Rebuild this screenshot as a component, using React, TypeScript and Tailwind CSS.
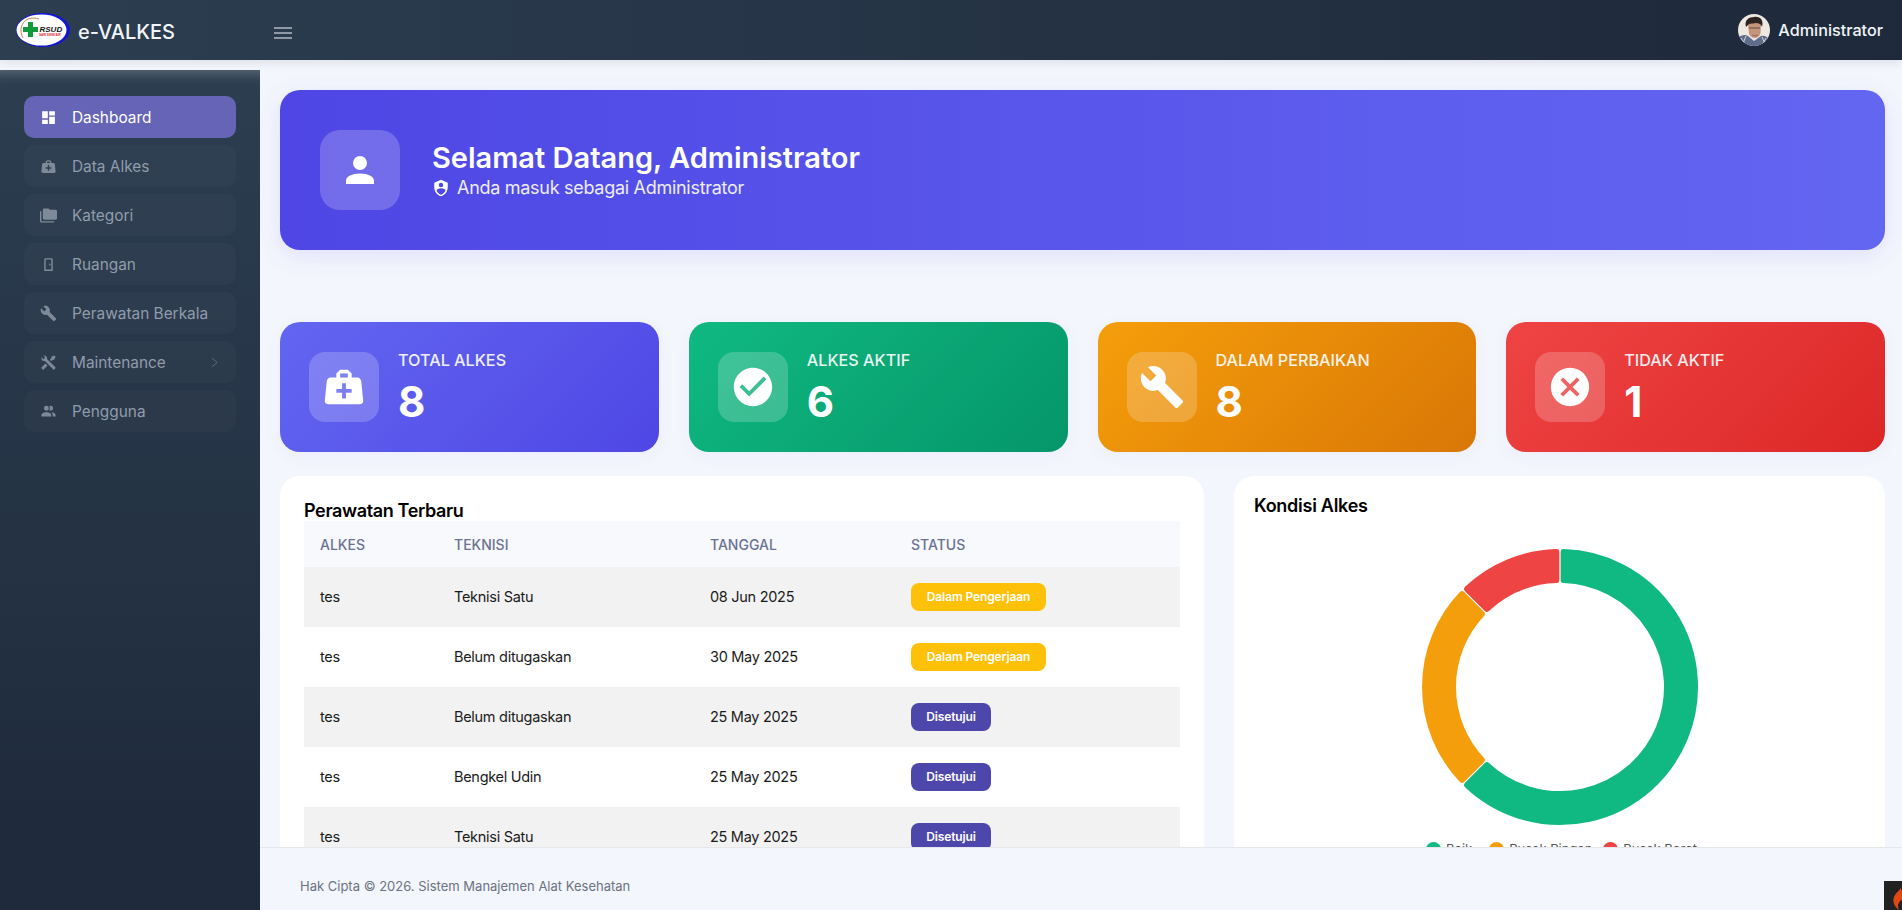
import React from "react";

const ICONS = {
  dashboard: "M13,3V9H21V3M13,21H21V11H13M3,21H11V15H3M3,13H11V3H3V13Z",
  bag: "M10,3L8,5V7H5C3.85,7 3.12,8 3,9L2,19C1.88,20 2.54,21 4,21H20C21.46,21 22.12,20 22,19L21,9C20.88,8 20.06,7 19,7H16V5L14,3H10M10,5H14V7H10V5M11,10H13V13H16V15H13V18H11V15H8V13H11V10Z",
  folders: "M22,4H14L12,2H6A2,2 0 0,0 4,4V16A2,2 0 0,0 6,18H22A2,2 0 0,0 24,16V6A2,2 0 0,0 22,4M2,6H0V20A2,2 0 0,0 2,22H20V20H2V6Z",
  door: "M8,3C6.89,3 6,3.89 6,5V21H18V5C18,3.89 17.11,3 16,3H8M8,5H16V19H8V5M13,11V13H15V11H13Z",
  wrench: "M22.7,19L13.6,9.9C14.5,7.6 14,4.9 12.1,3C10.1,1 7.1,0.6 4.7,1.7L9,6L6,9L1.6,4.7C0.4,7.1 0.9,10.1 2.9,12.1C4.8,14 7.5,14.5 9.8,13.6L18.9,22.7C19.3,23.1 19.9,23.1 20.3,22.7L22.6,20.4C23.1,20 23.1,19.3 22.7,19Z",
  tools: "M21.71 20.29L20.29 21.71A1 1 0 0 1 18.88 21.71L7 9.85A3.81 3.81 0 0 1 6 10A4 4 0 0 1 2.22 4.7L4.76 7.24L5.29 6.71L6.71 5.29L7.24 4.76L4.7 2.22A4 4 0 0 1 10 6A3.81 3.81 0 0 1 9.85 7L21.71 18.88A1 1 0 0 1 21.71 20.29M2.29 18.88A1 1 0 0 0 2.29 20.29L3.71 21.71A1 1 0 0 0 5.12 21.71L10.59 16.25L7.76 13.42M20 2L16 4V6L13.83 8.17L15.83 10.17L18 8H20L22 4Z",
  users: "M16 17V19H2V17S2 13 9 13 16 17 16 17M12.5 7.5A3.5 3.5 0 1 0 9 11A3.5 3.5 0 0 0 12.5 7.5M15.94 13A5.32 5.32 0 0 1 18 17V19H22V17S22 13.37 15.94 13M15 4A3.39 3.39 0 0 0 13.07 4.59A5 5 0 0 1 13.07 10.41A3.39 3.39 0 0 0 15 11A3.5 3.5 0 0 0 15 4Z",
  account: "M12,4A4,4 0 0,1 16,8A4,4 0 0,1 12,12A4,4 0 0,1 8,8A4,4 0 0,1 12,4M12,14C16.42,14 20,15.79 20,18V20H4V18C4,15.79 7.58,14 12,14Z",
  shield: "M12,1L3,5V11C3,16.55 6.84,21.74 12,23C17.16,21.74 21,16.55 21,11V5L12,1M12,5A3,3 0 0,1 15,8A3,3 0 0,1 12,11A3,3 0 0,1 9,8A3,3 0 0,1 12,5M17.13,17C15.92,18.85 14.11,20.24 12,20.92C9.89,20.24 8.08,18.85 6.87,17C6.53,16.5 6.24,16 6,15.47C6,13.82 8.71,12.47 12,12.47C15.29,12.47 18,13.79 18,15.47C17.76,16 17.47,16.5 17.13,17Z",
  check: "M12 2C6.5 2 2 6.5 2 12S6.5 22 12 22 22 17.5 22 12 17.5 2 12 2M10 17L5 12L6.41 10.59L10 14.17L17.59 6.58L19 8L10 17Z",
  close: "M12,2C17.53,2 22,6.47 22,12C22,17.53 17.53,22 12,22C6.47,22 2,17.53 2,12C2,6.47 6.47,2 12,2M15.59,7L12,10.59L8.41,7L7,8.41L10.59,12L7,15.59L8.41,17L12,13.41L15.59,17L17,15.59L13.41,12L17,8.41L15.59,7Z",
};

function Icon({ d, className }: { d: string; className?: string }) {
  return (
    <svg viewBox="0 0 24 24" fill="currentColor" fillRule="evenodd" className={className}>
      <path d={d} />
    </svg>
  );
}

function Logo() {
  return (
    <svg viewBox="0 0 54 34" className="h-[34px] w-[54px] shrink-0">
      <ellipse cx="27" cy="17" rx="27" ry="17" fill="#1414d8" />
      <ellipse cx="25.5" cy="17" rx="25" ry="15.6" fill="#ffffff" />
      <path d="M7 25C3 18 5 9 12 6C16 4.5 20 5 23 6" fill="none" stroke="#c9793f" strokeWidth="0.9" />
      <path d="M12 9H17V14H22V19H17V24H12V19H7V14H12Z" fill="#0f9b3c" />
      <text x="23.5" y="18.5" fontSize="8" fontWeight="800" fontStyle="italic" fontFamily="Liberation Sans, sans-serif" fill="#111111">RSUD</text>
      <text x="23" y="22.5" fontSize="3" fontWeight="700" fontFamily="Liberation Sans, sans-serif" fill="#e0242f">SARI DEWI AIR</text>
    </svg>
  );
}

function Avatar() {
  return (
    <svg viewBox="0 0 32 32" className="h-8 w-8 rounded-full">
      <rect width="32" height="32" fill="#ece8e2" />
      <path d="M0 32V24C3 21 7 20 10 22L16 27L23 22C26 21 30 23 32 26V32Z" fill="#5f6c8c" />
      <path d="M3 24L8 32M8 22L4 32M24 23L28 32M28 24L24 32" stroke="#d7d3d3" strokeWidth="1" />
      <path d="M10 10C10 6 22 6 23 11L22.5 19C21 25 14 26 11 20Z" fill="#c4957a" />
      <path d="M8 13C6 6 11 3 16 3C22 2 26 6 24 13C23 10 21 9 18 9C14 10 11 9 10 11Z" fill="#2d2322" />
      <path d="M11 14H15M18 14H22M15 14H18" stroke="#4b3b36" strokeWidth="0.8" />
      <path d="M14 21C16 22 18 22 20 21" stroke="#8a5c4c" strokeWidth="0.8" fill="none" />
    </svg>
  );
}

const menu = [
  { label: "Dashboard", icon: ICONS.dashboard, active: true },
  { label: "Data Alkes", icon: ICONS.bag },
  { label: "Kategori", icon: ICONS.folders },
  { label: "Ruangan", icon: ICONS.door },
  { label: "Perawatan Berkala", icon: ICONS.wrench },
  { label: "Maintenance", icon: ICONS.tools, arrow: true },
  { label: "Pengguna", icon: ICONS.users },
];

const stats = [
  { label: "TOTAL ALKES", value: "8", icon: ICONS.bag, bg: "from-[#6366f1] to-[#4f46e5]" },
  { label: "ALKES AKTIF", value: "6", icon: ICONS.check, bg: "from-[#10b981] to-[#059669]" },
  { label: "DALAM PERBAIKAN", value: "8", icon: ICONS.wrench, bg: "from-[#f59e0b] to-[#d97706]" },
  { label: "TIDAK AKTIF", value: "1", icon: ICONS.close, bg: "from-[#ef4444] to-[#dc2626]" },
];

const rows = [
  { alkes: "tes", teknisi: "Teknisi Satu", tanggal: "08 Jun 2025", status: "Dalam Pengerjaan" },
  { alkes: "tes", teknisi: "Belum ditugaskan", tanggal: "30 May 2025", status: "Dalam Pengerjaan" },
  { alkes: "tes", teknisi: "Belum ditugaskan", tanggal: "25 May 2025", status: "Disetujui" },
  { alkes: "tes", teknisi: "Bengkel Udin", tanggal: "25 May 2025", status: "Disetujui" },
  { alkes: "tes", teknisi: "Teknisi Satu", tanggal: "25 May 2025", status: "Disetujui" },
];

// one ring slice, corners are rounded by a stroke in the same colour
function slice(cx: number, cy: number, r0: number, r1: number, a0: number, a1: number) {
  const pt = (r: number, a: number) => {
    const t = ((a - 90) * Math.PI) / 180;
    return `${(cx + r * Math.cos(t)).toFixed(2)} ${(cy + r * Math.sin(t)).toFixed(2)}`;
  };
  const large = a1 - a0 > 180 ? 1 : 0;
  const d0 = (3.6 / r0) * (180 / Math.PI);
  const d1 = (3.6 / r1) * (180 / Math.PI);
  return `M${pt(r1, a0 + d1)}A${r1} ${r1} 0 ${large} 1 ${pt(r1, a1 - d1)}L${pt(r0, a1 - d0)}A${r0} ${r0} 0 ${large} 0 ${pt(r0, a0 + d0)}Z`;
}

function Donut() {
  const parts = [
    { from: 0, to: 225, color: "#10b981" },
    { from: 225, to: 315, color: "#f59e0b" },
    { from: 315, to: 360, color: "#ef4444" },
  ];
  return (
    <svg viewBox="0 0 280 280" className="h-[280px] w-[280px]">
      {parts.map((p) => (
        <path
          key={p.color}
          d={slice(140, 140, 107, 135, p.from, p.to)}
          fill={p.color}
          stroke={p.color}
          strokeWidth="6"
          strokeLinejoin="round"
        />
      ))}
    </svg>
  );
}

export default function App() {
  return (
    <div className="flex h-screen flex-col overflow-hidden bg-[#f4f6fd] font-['Inter',sans-serif] text-[#1a1a1a]">
      <header className="relative z-10 flex h-[60px] shrink-0 items-center bg-linear-to-r from-[#2c3e50] to-[#1e293b] pl-4 pr-[19px] shadow-[0_2px_10px_rgba(0,0,0,0.1)]">
        <div className="flex w-[258px] items-center gap-2">
          <Logo />
          <span className="pt-[3px] text-[20px] font-medium text-[#f1f5f9]">e-VALKES</span>
        </div>
        <div className="mt-[5px] flex flex-col gap-[3px]">
          <span className="h-[2px] w-[18px] bg-[#8f99a6]" />
          <span className="h-[2px] w-[18px] bg-[#8f99a6]" />
          <span className="h-[2px] w-[18px] bg-[#8f99a6]" />
        </div>
        <div className="ml-auto flex items-center gap-2">
          <Avatar />
          <span className="text-[16.2px] font-medium text-[#f1f5f9]">Administrator</span>
        </div>
      </header>

      <div className="flex min-h-0 flex-1 pt-[10px]">
        <aside className="flex w-[260px] shrink-0 flex-col gap-[7px] bg-linear-to-b from-[#2c3e50] to-[#1e293b] px-6 pt-[26px] shadow-[inset_0_14px_12px_-10px_rgba(255,255,255,0.22)]">
          {menu.map((m) => (
            <div
              key={m.label}
              className={
                m.active
                  ? "flex h-[42px] items-center rounded-[10px] bg-[#6664b6] pl-4 pr-[18px] text-white"
                  : "flex h-[42px] items-center rounded-[10px] bg-white/[0.025] pl-4 pr-[18px] text-[#909cab]"
              }
            >
              <Icon d={m.icon} className={m.active ? "h-[17px] w-[17px] text-white" : "h-[17px] w-[17px] text-[#7e8a99]"} />
              <span className="ml-[15px] pt-[2px] text-[15.4px] leading-none">{m.label}</span>
              {m.arrow && (
                <svg viewBox="0 0 8 12" className="ml-auto h-[11px] w-[7px]" fill="none" stroke="#657484" strokeWidth="1">
                  <path d="M1 1L7 6L1 11" />
                </svg>
              )}
            </div>
          ))}
        </aside>

        <div className="flex min-w-0 flex-1 flex-col">
          <main className="min-h-0 flex-1 overflow-hidden pl-5 pr-[17px] pt-5">
            <section className="flex h-40 items-center gap-8 rounded-[20px] bg-linear-to-r from-[#4f46e5] to-[#6366f1] px-10 shadow-[0_6px_24px_rgba(79,70,229,0.12)]">
              <div className="flex h-20 w-20 items-center justify-center rounded-[20px] bg-white/20">
                <Icon d={ICONS.account} className="h-[42px] w-[42px] text-white" />
              </div>
              <div className="pt-[1px] text-white">
                <h1 className="text-[29px] font-semibold leading-[34px]">Selamat Datang, Administrator</h1>
                <div className="flex items-center gap-[7px] text-[18px] leading-[26px] tracking-[-0.016em] text-white/90">
                  <Icon d={ICONS.shield} className="h-[18px] w-[18px] text-white" />
                  Anda masuk sebagai Administrator
                </div>
              </div>
            </section>

            <section className="mt-[72px] grid grid-cols-4 gap-[30px]">
              {stats.map((s) => (
                <div
                  key={s.label}
                  className={`flex h-[130px] items-center gap-[19px] rounded-[20px] bg-linear-135 ${s.bg} px-[29px] shadow-[0_4px_16px_rgba(79,70,229,0.05)]`}
                >
                  <div className="flex h-[70px] w-[70px] shrink-0 items-center justify-center rounded-[16px] bg-white/20">
                    <Icon d={s.icon} className="h-[46px] w-[46px] text-white" />
                  </div>
                  <div className="pt-[3px] text-white">
                    <div className="text-[16.2px] font-medium leading-[24px] opacity-90">{s.label}</div>
                    <div className="mt-[3px] text-[42px] font-bold leading-[54px]">{s.value}</div>
                  </div>
                </div>
              ))}
            </section>

            <section className="mt-6 grid grid-cols-[924px_651px] gap-[30px]">
              <div className="h-[460px] rounded-[20px] bg-white px-6 pt-6">
                <h2 className="text-[18px] font-semibold leading-[21px] tracking-[-0.02em] text-black">Perawatan Terbaru</h2>
                <table className="w-full table-fixed border-collapse text-[14.5px] tracking-[-0.02em]">
                  <thead>
                    <tr className="h-[46px] bg-[#f8f9fc] text-left text-[14px] font-medium tracking-normal text-[#6b7394]">
                      <th className="w-[134px] pl-4 font-medium">ALKES</th>
                      <th className="w-[256px] pl-4 font-medium">TEKNISI</th>
                      <th className="w-[201px] pl-4 font-medium">TANGGAL</th>
                      <th className="pl-4 font-medium">STATUS</th>
                    </tr>
                  </thead>
                  <tbody>
                    {rows.map((r, i) => (
                      <tr key={i} className={i % 2 === 0 ? "h-[60px] bg-[#f2f2f2]" : "h-[60px] bg-white"}>
                        <td className="pl-4">{r.alkes}</td>
                        <td className="pl-4">{r.teknisi}</td>
                        <td className="pl-4">{r.tanggal}</td>
                        <td className="pl-4">
                          <span
                            className={
                              r.status === "Disetujui"
                                ? "inline-flex h-[28px] w-[80px] items-center justify-center rounded-lg bg-[#4e47ab] text-[12px] font-semibold tracking-[-0.01em] text-white"
                                : "inline-flex h-[28px] w-[135px] items-center justify-center rounded-lg bg-[#ffc107] text-[12px] font-semibold tracking-[-0.01em] text-white"
                            }
                          >
                            {r.status}
                          </span>
                        </td>
                      </tr>
                    ))}
                  </tbody>
                </table>
              </div>

              <div className="h-[460px] rounded-[20px] bg-white px-5 pt-[19px]">
                <h2 className="text-[18px] font-semibold leading-[22px] tracking-[-0.015em] text-black">Kondisi Alkes</h2>
                <div className="mt-[30px] flex justify-center pl-[1px]">
                  <Donut />
                </div>
                <div className="mt-[15px] flex justify-center gap-[11px] pl-[4px] text-[13px] leading-[15px] text-[#555555]">
                  <span className="mr-[6px] flex items-center gap-[5px]"><i className="h-[15px] w-[15px] rounded-full bg-[#10b981]" />Baik</span>
                  <span className="flex items-center gap-[5px]"><i className="h-[15px] w-[15px] rounded-full bg-[#f59e0b]" />Rusak Ringan</span>
                  <span className="flex items-center gap-[5px]"><i className="h-[15px] w-[15px] rounded-full bg-[#ef4444]" />Rusak Berat</span>
                </div>
              </div>
            </section>
          </main>

          <footer className="relative flex h-[63px] shrink-0 items-center border-t border-[#e5e7eb] bg-[#f4f6fd] pl-10 pt-[16px] text-[13px] text-[#6b7280]">
            Hak Cipta © 2026. Sistem Manajemen Alat Kesehatan
            <div className="absolute bottom-0 right-0 h-[29px] w-[18px] overflow-hidden bg-[#222222]">
              <svg viewBox="0 0 12 24" className="absolute left-[9px] top-[5px] h-6 w-3">
                <path d="M7 0C9 4 3 6 1 11C-1 16 2 21 6 24C4 20 5 17 8 14C10 17 12 19 12 21V8C10 7 8 4 7 0Z" fill="#dd4814" />
              </svg>
            </div>
          </footer>
        </div>
      </div>
    </div>
  );
}
